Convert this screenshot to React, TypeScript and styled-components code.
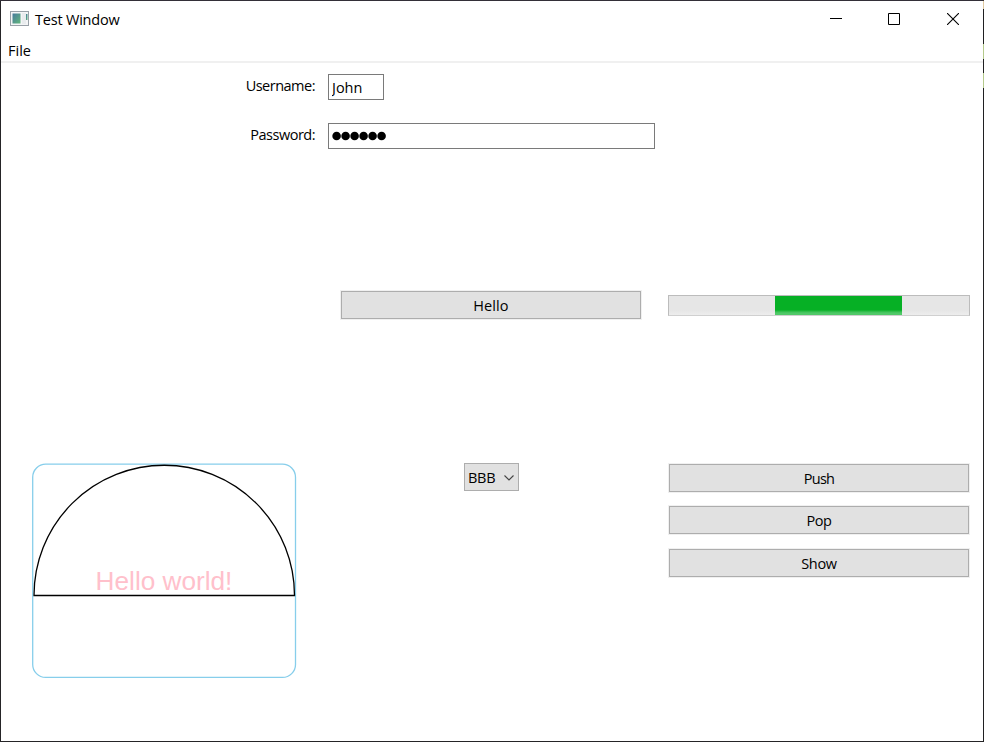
import React from "react";
import styled, { createGlobalStyle } from "styled-components";

const GlobalStyle = createGlobalStyle`
  *, *::before, *::after { box-sizing: border-box; }
  body { margin: 0; background: #fff; }
`;

/* The one-pixel frame shows the desktop behind the window. */
const Window = styled.div`
  width: 984px;
  height: 742px;
  padding: 1px;
  display: flex;
  flex-direction: column;
  color: #000;
  font: 14.5px/20px "Open Sans", "Noto Sans", sans-serif;
  background:
    linear-gradient(#332f38, #332f38) 0 0 / 100% 1px no-repeat,
    linear-gradient(#e0c9a0 0 9px, #202022 9px 44px, #b4c98a 44px 59px, #202022 59px 73px, #b4c98a 73px 88px, #202022 88px) 100% 0 / 1px 100% no-repeat,
    #252427;
`;

const TitleBar = styled.header`
  flex: none;
  height: 38px;
  padding: 0 0 2px 9px;
  display: flex;
  align-items: center;
  background: #fff;
`;

const Title = styled.h1`
  margin: 2px auto 0 5px;
  font: inherit;
`;

const Caption = styled.button`
  width: 58px;
  height: 36px;
  padding: 0;
  border: 0;
  background: none;
  display: flex;
  align-items: center;
  justify-content: center;
  &:last-child { width: 60px; }
`;

const MenuBar = styled.nav`
  flex: none;
  height: 24px;
  padding: 2px 7px;
  background: #fff;
  border-bottom: 2px solid #f0f0f0;
`;

const Label = styled.span<{ $tracking?: number }>`
  display: inline-block;
  white-space: nowrap;
  letter-spacing: ${(p) => p.$tracking ?? 0}px;
`;

const Content = styled.main`
  flex: 1;
  display: grid;
  grid-template-columns: 327px 327px 1fr;
  grid-template-rows: 49px 168px 172px 1fr;
  align-items: start;
  padding-top: 11px;
  background: #fff;
`;

const FieldLabel = styled.label`
  justify-self: end;
  margin: 2px 13px 0 0;
`;

const Field = styled.input<{ $width: number }>`
  width: ${(p) => p.$width}px;
  height: 26px;
  padding: 1px 3px 0;
  border: 1px solid #7a7a7a;
  border-radius: 0;
  outline: 0;
  background: #fff;
  color: #000;
  font: inherit;
`;

const PasswordBox = styled.div`
  height: 26px;
  padding-left: 3px;
  display: flex;
  align-items: center;
  border: 1px solid #7a7a7a;
`;

const Dots = styled.svg`
  display: block;
  width: 56px;
  height: 10px;
`;

const PushButton = styled.button`
  width: 300px;
  height: 28px;
  padding: 1px 0 0;
  border: 1px solid #adadad;
  box-shadow: 0 0 0 1px #f0f0f0;
  background: #e1e1e1;
  color: #000;
  font: inherit;
`;

const ButtonCell = styled.div`
  grid-column: 2;
  padding-left: 13px;
`;

const Progress = styled.div`
  grid-column: 3;
  width: 302px;
  height: 21px;
  margin: 4px 0 0 13px;
  padding-left: 106px;
  border: 1px solid #bcbcbc;
  border-bottom-color: #d0d0d0;
  background: linear-gradient(#e6e6e6 14px, #ededed);
`;

const ProgressChunk = styled.div`
  width: 127px;
  height: 19px;
  background: linear-gradient(#06b025 0 14px, #25b941 15px, #50c968 17px 19px);
`;

const Drawing = styled.svg`
  display: block;
  width: 327px;
  height: 230px;
`;

const Select = styled.button`
  justify-self: center;
  width: 55px;
  height: 28px;
  padding: 1px 4px 0 3px;
  display: flex;
  align-items: center;
  justify-content: space-between;
  border: 1px solid #adadad;
  background: #e1e1e1;
  color: #000;
  font: inherit;
`;

const ButtonStack = styled.div`
  display: grid;
  grid-template-rows: 42px 43px 28px;
  padding: 1px 0 0 14px;
`;

const AppIcon = () => (
  <svg width="20" height="16" viewBox="0 0 20 16">
    <defs>
      <linearGradient id="pane" x2="1" y2="1">
        <stop stopColor="#477a9c" />
        <stop offset="1" stopColor="#62b77c" />
      </linearGradient>
    </defs>
    <rect x=".5" y=".5" width="18" height="14" fill="#f4f5f6" stroke="#99a1a8" />
    <rect x="2.5" y="2.5" width="8" height="10" fill="url(#pane)" />
    <rect x="12" y="2" width="4" height="11" fill="#e9ecee" />
    <rect x="16" y="3" width="1.5" height="6" fill="url(#pane)" />
  </svg>
);

export default function App() {
  return (
    <>
      <GlobalStyle />
      <Window>
        <TitleBar>
          <AppIcon />
          <Title><Label $tracking={-0.2}>Test Window</Label></Title>
          <Caption aria-label="Minimize">
            <svg width="12" height="12"><path d="M0 5.5h12" stroke="#000" /></svg>
          </Caption>
          <Caption aria-label="Maximize">
            <svg width="12" height="12"><path d="M.5.5h11v11H.5z" fill="none" stroke="#000" /></svg>
          </Caption>
          <Caption aria-label="Close">
            <svg width="12" height="12"><path d="M0 0l12 12M12 0L0 12" stroke="#000" strokeWidth="1.1" /></svg>
          </Caption>
        </TitleBar>
        <MenuBar><Label>File</Label></MenuBar>
        <Content>
          <FieldLabel htmlFor="user"><Label $tracking={-0.5}>Username:</Label></FieldLabel>
          <Field id="user" $width={56} defaultValue="John" />
          <span />
          <FieldLabel><Label $tracking={-0.5}>Password:</Label></FieldLabel>
          <PasswordBox>
            <Dots viewBox="0 0 56 10">
              {[0, 1, 2, 3, 4, 5].map((i) => <circle key={i} cx={4.6 + i * 9} cy={5} r={4.3} />)}
            </Dots>
          </PasswordBox>
          <span />
          <ButtonCell><PushButton><Label $tracking={0.1}>Hello</Label></PushButton></ButtonCell>
          <Progress><ProgressChunk /></Progress>
          <Drawing viewBox="1 463 327 230">
            <rect x="32.7" y="464.2" width="262.8" height="213.2" rx="13" fill="none" stroke="#87ceeb" strokeWidth="1.3" />
            <path d="M34 595.5A130.25 130.25 0 0 1 294.5 595.5Z" fill="none" stroke="#000" strokeWidth="1.3" />
            <text x="164" y="589.7" textAnchor="middle" fill="#ffc0cb" fontFamily="Liberation Sans, Arial, sans-serif" fontSize="26.2">Hello world!</text>
          </Drawing>
          <Select>
            <Label $tracking={-0.3}>BBB</Label>
            <svg width="10" height="6"><path d="M.5.5L5 5 9.5.5" fill="none" stroke="#444" strokeWidth="1.1" /></svg>
          </Select>
          <ButtonStack>
            <PushButton><Label $tracking={-0.7}>Push</Label></PushButton>
            <PushButton><Label $tracking={-0.4}>Pop</Label></PushButton>
            <PushButton><Label $tracking={-0.3}>Show</Label></PushButton>
          </ButtonStack>
        </Content>
      </Window>
    </>
  );
}
